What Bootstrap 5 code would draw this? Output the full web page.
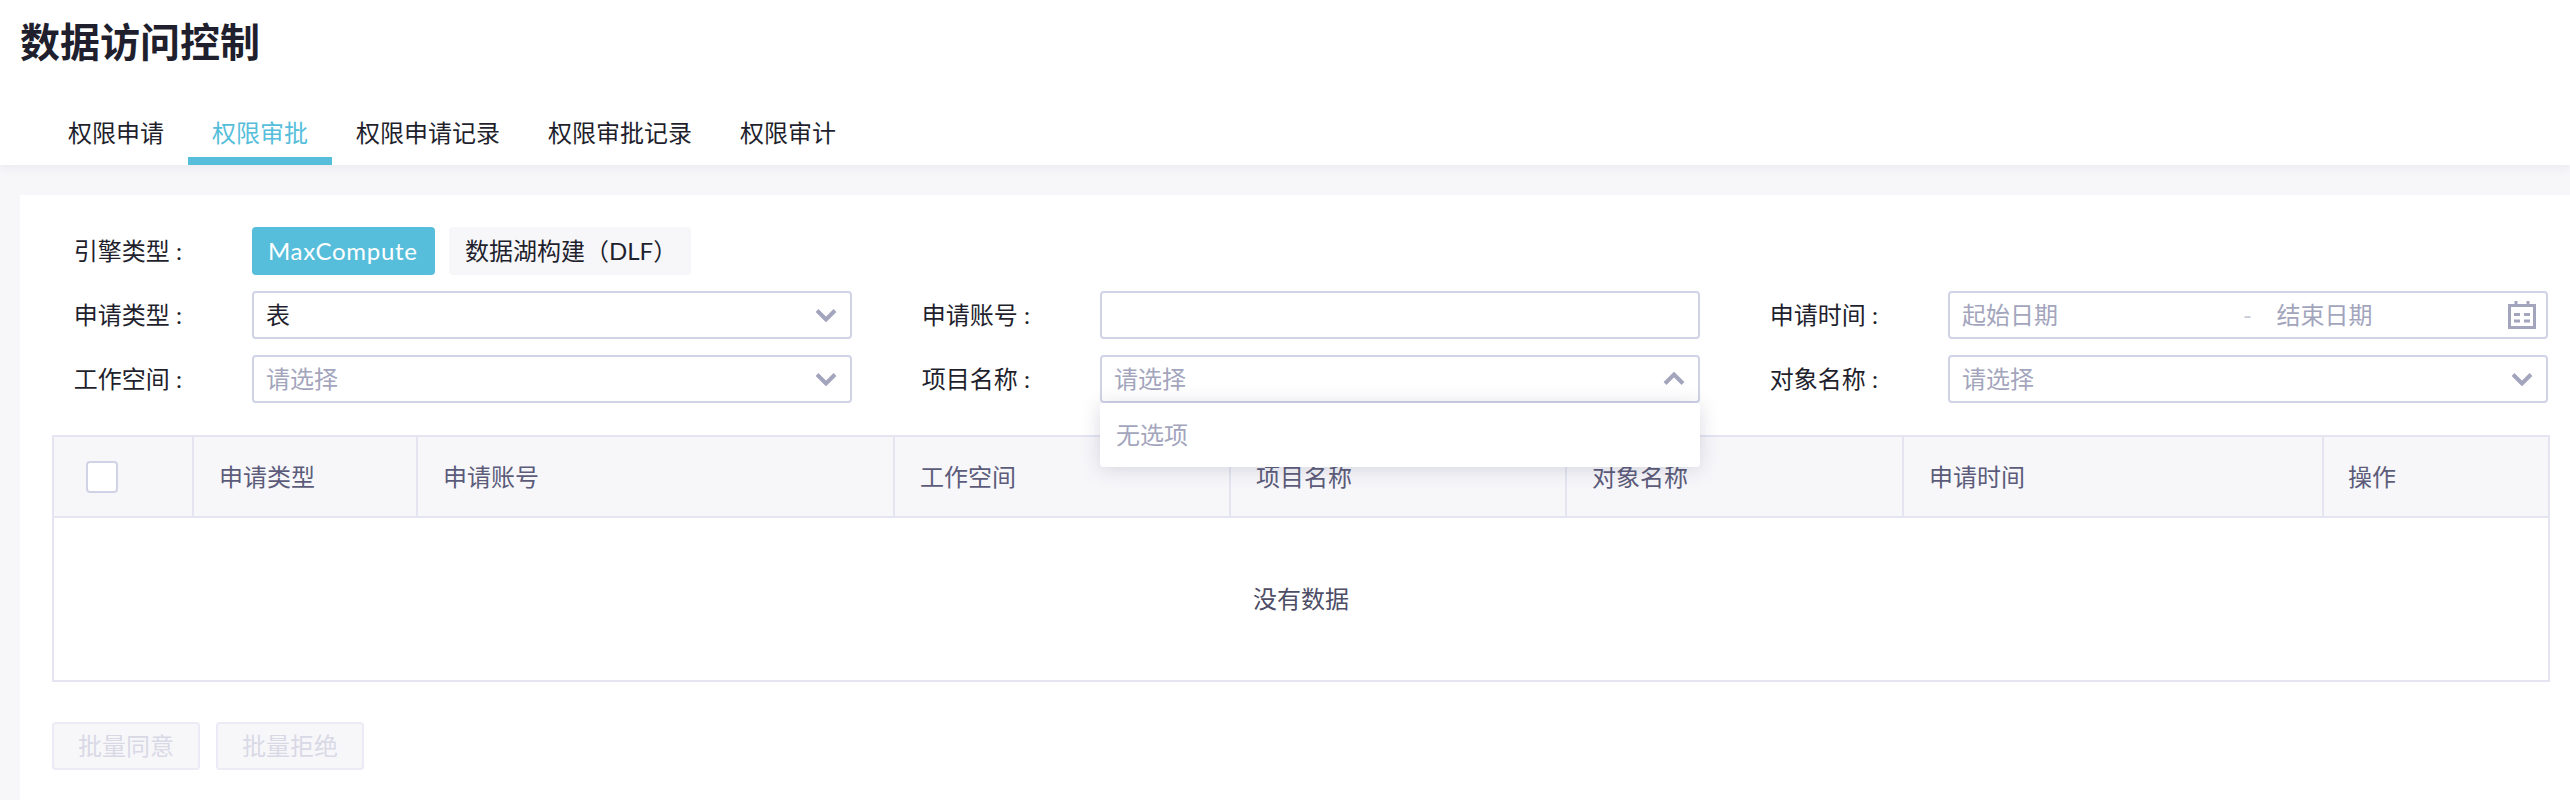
<!DOCTYPE html>
<html lang="zh-CN">
<head>
  <meta charset="UTF-8">
  <meta name="viewport" content="width=device-width, initial-scale=1">
  <title>数据访问控制</title>
  <link href="https://cdn.jsdelivr.net/npm/bootstrap@5.3.0/dist/css/bootstrap.min.css" rel="stylesheet">
  <style>
    html, body { height: 100%; }
    body {
      background: #f7f7fa;
      color: #1f1f2e;
      font-family: "Lato", "Noto Sans CJK SC", sans-serif;
      font-size: 24px;
      line-height: 32px;
    }
    .page-wrap { height: 800px; overflow: hidden; }

    /* header */
    .page-head { background: #fff; box-shadow: 0 2px 10px rgba(60, 60, 100, .08); position: relative; }
    .page-title { font-size: 40px; line-height: 56px; font-weight: 700; margin: 0; padding: 14px 0 31px 20px; color: #1f1f2e; }
    .tab-bar { padding-left: 44px; }
    .tab-bar .nav-link {
      padding: 16px 24px 8px;
      border-bottom: 8px solid transparent;
      color: #1f1f2e;
    }
    .tab-bar .nav-link.active { color: #56bedb; border-bottom-color: #56bedb; }

    /* main card */
    .main-panel { background: #fff; margin: 30px 0 0 20px; padding: 32px 22px 30px 32px; height: 635px; }
    .filter-grid { display: grid; grid-template-columns: repeat(3, 800px); justify-content: space-between; row-gap: 16px; }
    .field-row { display: flex; align-items: center; height: 48px; }
    .field-label { width: 130px; margin-right: 70px; text-align: right; flex: none; white-space: nowrap; }
    .engine-btn { width: 242px; height: 48px; padding: 0 16px; border: 0; border-radius: 4px; font-size: 24px; line-height: 48px; text-align: left; white-space: nowrap; background: #f7f7fa; color: #1f1f2e; }
    .engine-btn.is-on { width: 183px; margin-right: 14px; background: #56bedb; color: #fff; letter-spacing: .7px; }

    .field-box {
      width: 600px; height: 48px; padding: 0 12px;
      border: 2px solid #d0d2e5; border-radius: 4px;
      font-size: 24px; line-height: 44px; color: #1f1f2e; background: #fff;
      position: relative;
    }
    .form-control.field-box { padding: 0 12px; font-size: 24px; line-height: 44px; border: 2px solid #d0d2e5; }
    .hint-text { color: #a3a5bd; }
    .chev { width: 22px; height: 14px; flex: none; margin-right: 1px; }
    .date-from { width: 281px; }
    .date-dash { width: 33.5px; color: #c8cadb; }
    .cal-icon { width: 28px; height: 28px; flex: none; margin-left: auto; margin-right: -2px; }

    .field-box .dropdown-menu {
      left: -2px; top: 46px; width: 600px; height: 64px; min-width: 0;
      margin: 0; padding: 0 16px; border: 0; border-radius: 4px;
      font-size: 24px; line-height: 64px; color: #a3a5bd;
      box-shadow: 0 2px 20px rgba(50, 50, 90, .18);
      z-index: 20;
    }

    /* table */
    .data-table { width: 2496px; table-layout: fixed; margin: 32px 0 40px; border: 2px solid #e4e5f1; --bs-table-bg: transparent; }
    .data-table th, .data-table td { border: 0; border-style: solid; padding: 0; }
    .data-table th {
      height: 81px; padding-left: 25px; background: #f7f7fa; color: #5c5c7a;
      font-weight: 400; border-right: 2px solid #e4e5f1; border-bottom: 2px solid #e4e5f1; vertical-align: middle;
    }
    .data-table th:last-child { border-right: 0; padding-left: 24px; }
    .col-a { width: 140px; } .col-b { width: 224px; } .col-c { width: 477px; } .col-d { width: 336px; }
    .col-e { width: 336px; } .col-f { width: 337px; } .col-g { width: 420px; } .col-h { width: 226px; }
    .data-table td { height: 164px; text-align: center; vertical-align: middle; color: #4d4d66; }
    .check-box { display: block; width: 32px; height: 32px; margin: 0 0 0 7px; background: #fff; border: 2px solid #d0d2e5; border-radius: 4px; appearance: none; }

    /* batch buttons */
    .batch-btn {
      width: 148px; height: 48px; padding: 0; border: 2px solid #ebebf5; border-radius: 4px;
      background: #f7f7fa; color: #d9d9e6; font-size: 24px; line-height: 44px; opacity: 1;
    }
    .batch-btn:disabled { background: #f7f7fa; color: #d9d9e6; border-color: #ebebf5; opacity: 1; }
  </style>
</head>
<body>

<div class="page-wrap">
  <div class="page-head">
    <h1 class="page-title">数据访问控制</h1>
    <ul class="nav tab-bar">
      <li class="nav-item"><a class="nav-link" href="#">权限申请</a></li>
      <li class="nav-item"><a class="nav-link active" href="#">权限审批</a></li>
      <li class="nav-item"><a class="nav-link" href="#">权限申请记录</a></li>
      <li class="nav-item"><a class="nav-link" href="#">权限审批记录</a></li>
      <li class="nav-item"><a class="nav-link" href="#">权限审计</a></li>
    </ul>
  </div>

  <div class="main-panel">
    <div class="field-row mb-3">
      <span class="field-label">引擎类型 :</span>
      <div class="d-flex engine-group">
        <button type="button" class="btn engine-btn is-on">MaxCompute</button>
        <button type="button" class="btn engine-btn">数据湖构建（DLF）</button>
      </div>
    </div>

    <div class="filter-grid">
      <div class="field-row">
        <span class="field-label">申请类型 :</span>
        <div class="field-box d-flex align-items-center justify-content-between">
          <span>表</span>
          <svg class="chev" viewBox="0 0 22 14"><path d="M2 2.5l9 9 9-9" fill="none" stroke="#a3a5bd" stroke-width="4"/></svg>
        </div>
      </div>
      <div class="field-row">
        <span class="field-label">申请账号 :</span>
        <input type="text" class="form-control field-box">
      </div>
      <div class="field-row">
        <span class="field-label">申请时间 :</span>
        <div class="field-box d-flex align-items-center hint-text">
          <span class="date-from">起始日期</span>
          <span class="date-dash">-</span>
          <span>结束日期</span>
          <svg class="cal-icon" viewBox="0 0 28 28">
            <path d="M8 0v6M20 0v6" stroke="#a3a5bd" stroke-width="3"/>
            <rect x="1.5" y="4.5" width="25" height="22" fill="none" stroke="#a3a5bd" stroke-width="3"/>
            <path d="M6 13.5h6M16 13.5h6M6 20h6M16 20h6" stroke="#a3a5bd" stroke-width="3"/>
          </svg>
        </div>
      </div>

      <div class="field-row">
        <span class="field-label">工作空间 :</span>
        <div class="field-box d-flex align-items-center justify-content-between hint-text">
          <span>请选择</span>
          <svg class="chev" viewBox="0 0 22 14"><path d="M2 2.5l9 9 9-9" fill="none" stroke="#a3a5bd" stroke-width="4"/></svg>
        </div>
      </div>
      <div class="field-row">
        <span class="field-label">项目名称 :</span>
        <div class="field-box dropdown d-flex align-items-center justify-content-between hint-text">
          <span>请选择</span>
          <svg class="chev" viewBox="0 0 22 14"><path d="M2 11.5l9-9 9 9" fill="none" stroke="#a3a5bd" stroke-width="4"/></svg>
          <div class="dropdown-menu show">无选项</div>
        </div>
      </div>
      <div class="field-row">
        <span class="field-label">对象名称 :</span>
        <div class="field-box d-flex align-items-center justify-content-between hint-text">
          <span>请选择</span>
          <svg class="chev" viewBox="0 0 22 14"><path d="M2 2.5l9 9 9-9" fill="none" stroke="#a3a5bd" stroke-width="4"/></svg>
        </div>
      </div>
    </div>

    <table class="table data-table">
      <thead>
        <tr>
          <th class="col-a"><input type="checkbox" class="check-box"></th>
          <th class="col-b">申请类型</th>
          <th class="col-c">申请账号</th>
          <th class="col-d">工作空间</th>
          <th class="col-e">项目名称</th>
          <th class="col-f">对象名称</th>
          <th class="col-g">申请时间</th>
          <th class="col-h">操作</th>
        </tr>
      </thead>
      <tbody>
        <tr><td colspan="8">没有数据</td></tr>
      </tbody>
    </table>

    <div class="d-flex batch-group">
      <button type="button" class="btn batch-btn me-3" disabled>批量同意</button>
      <button type="button" class="btn batch-btn" disabled>批量拒绝</button>
    </div>
  </div>
</div>

</body>
</html>
